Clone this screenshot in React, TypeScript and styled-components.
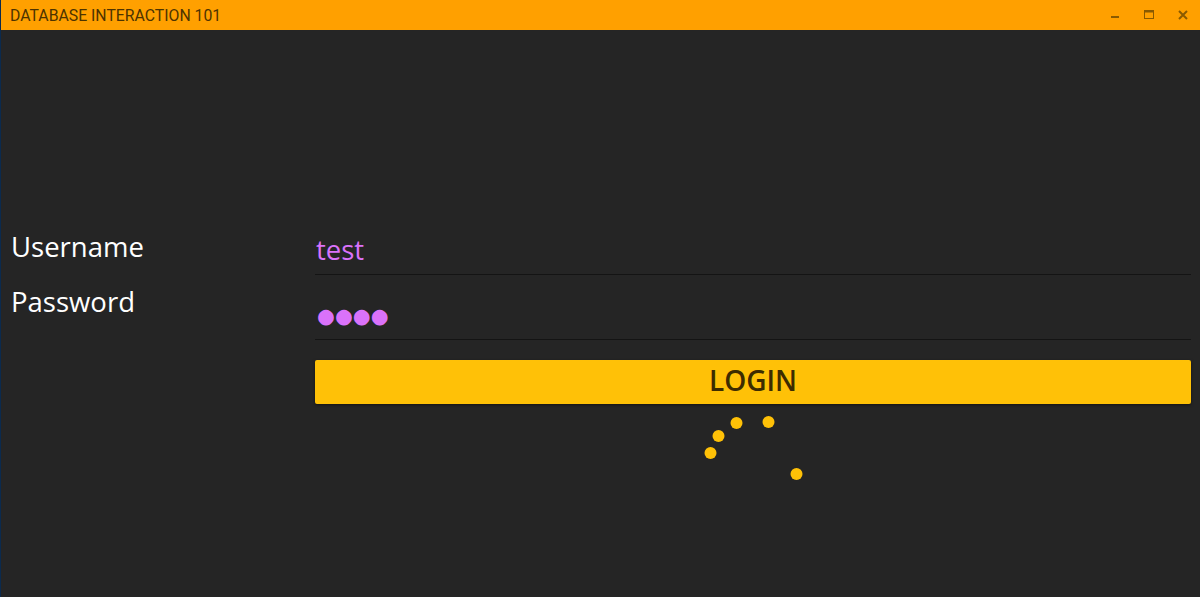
import styled, { createGlobalStyle } from 'styled-components'

const GlobalStyle = createGlobalStyle`
  html, body {
    margin: 0;
    padding: 0;
    height: 100%;
    background: #252525;
  }
  #root {
    height: 100%;
  }
`

const TitleIcon = ({ kind }: { kind: 'min' | 'max' | 'close' }) => {
  if (kind === 'min') {
    return (
      <svg width="10" height="10" viewBox="0 0 10 10">
        <rect x="1" y="6" width="8" height="2" fill="#8a5a00" />
      </svg>
    )
  }
  if (kind === 'max') {
    return (
      <svg width="10" height="10" viewBox="0 0 10 10">
        <rect x="0.5" y="0.5" width="9" height="8" fill="none" stroke="#8a5a00" />
        <rect x="0.5" y="0.5" width="9" height="2" fill="#8a5a00" />
      </svg>
    )
  }
  return (
    <svg width="10" height="10" viewBox="0 0 10 10">
      <path d="M1 1 L9 9 M9 1 L1 9" stroke="#8a5a00" strokeWidth="2" />
    </svg>
  )
}

const Spinner = () => (
  <SpinnerSvg width="100" height="70" viewBox="0 0 100 70">
    <circle cx="7.5" cy="41" r="6" fill="#ffc107" />
    <circle cx="15.5" cy="24" r="6" fill="#ffc107" />
    <circle cx="33.5" cy="11" r="6" fill="#ffc107" />
    <circle cx="65.5" cy="10" r="6" fill="#ffc107" />
    <circle cx="93.5" cy="62" r="6" fill="#ffc107" />
  </SpinnerSvg>
)

export default function App() {
  return (
    <Window>
      <GlobalStyle />
      <TitleBar>
        <Title>DATABASE INTERACTION 101</Title>
        <WindowButtons>
          <WindowButton><TitleIcon kind="min" /></WindowButton>
          <WindowButton><TitleIcon kind="max" /></WindowButton>
          <WindowButton><TitleIcon kind="close" /></WindowButton>
        </WindowButtons>
      </TitleBar>

      <Content>
        <Labels>
          <Label>Username</Label>
          <Label>Password</Label>
        </Labels>

        <Fields>
          <Field>
            <Value>test</Value>
          </Field>
          <Field>
            <Dots>●●●●</Dots>
          </Field>
          <LoginButton>LOGIN</LoginButton>
          <Spinner />
        </Fields>
      </Content>
    </Window>
  )
}

const Window = styled.div`
  height: 597px;
  display: flex;
  flex-direction: column;
  background: #252525;
  border-left: 1px solid #0b2a4d;
  box-sizing: border-box;
`

const TitleBar = styled.div`
  height: 30px;
  flex: none;
  display: flex;
  align-items: center;
  justify-content: space-between;
  background: #ffa000;
  padding-left: 9px;
`

const Title = styled.div`
  font-family: Roboto, sans-serif;
  font-size: 15.8px;
  color: #4d3300;
`

const WindowButtons = styled.div`
  display: flex;
  align-items: center;
`

const WindowButton = styled.div`
  width: 34px;
  height: 30px;
  display: flex;
  align-items: center;
  justify-content: center;
`

const Content = styled.div`
  flex: 1;
  display: grid;
  grid-template-columns: 304px 1fr;
  padding: 200px 9px 0 10px;
`

const Labels = styled.div`
  display: flex;
  flex-direction: column;
  gap: 17px;
  margin-top: -2px;
`

const Label = styled.div`
  font-family: "Open Sans", sans-serif;
  font-size: 27.5px;
  line-height: 38px;
  color: #ffffff;
`

const Fields = styled.div`
  display: flex;
  flex-direction: column;
`

const Field = styled.div`
  height: 44px;
  border-bottom: 1px solid #141414;
  display: flex;
  align-items: flex-end;
  padding-left: 1px;
  & + & {
    margin-top: 20px;
  }
`

const Value = styled.div`
  font-family: "Open Sans", sans-serif;
  font-size: 27.5px;
  line-height: 38px;
  color: #da72fa;
  padding-bottom: 5px;
`

const Dots = styled.div`
  font-family: "DejaVu Sans", sans-serif;
  font-size: 20.5px;
  line-height: 30px;
  color: #da72fa;
  padding-bottom: 8px;
  padding-left: 1px;
`

const LoginButton = styled.button`
  margin-top: 20px;
  height: 44px;
  border: none;
  border-radius: 2px;
  background: #ffc107;
  box-shadow: 0 1px 3px rgba(0, 0, 0, 0.5);
  font-family: "Open Sans", sans-serif;
  font-weight: 600;
  font-size: 28px;
  line-height: 38px;
  color: #3d2c00;
  padding: 0 0 4px;
`

const SpinnerSvg = styled.svg`
  align-self: center;
  margin-top: 8px;
`
